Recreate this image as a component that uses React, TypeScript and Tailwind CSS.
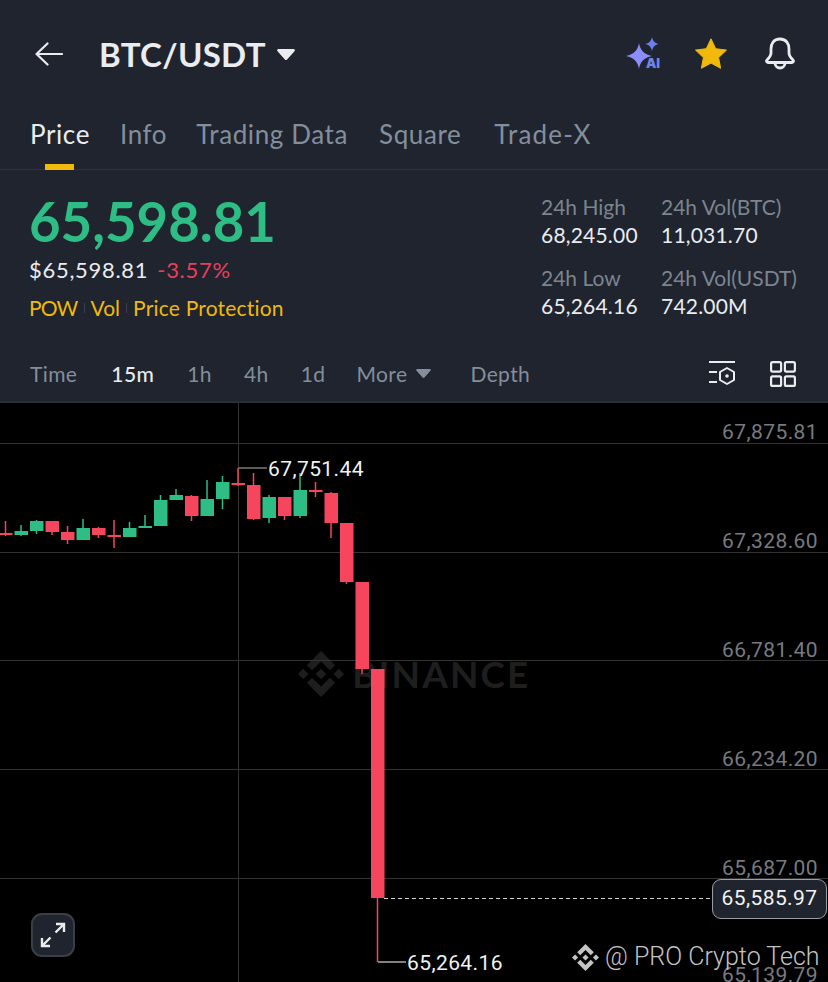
type Candle = { x: number; hi: number; lo: number; top: number; bottom: number; up: boolean };

const GREEN = '#2ebd85';
const RED = '#f6465d';

// x, wick top, wick bottom, body top, body bottom, green?
const candles: Candle[] = [
  [6, 521, 536, 533, 535, false],
  [21.5, 525, 536, 531, 535, true],
  [37, 520, 534, 521, 531, true],
  [52.5, 521, 535, 521, 532, false],
  [68, 526, 544, 532, 540, false],
  [83.5, 519, 540, 528, 540, true],
  [99, 527, 538, 528, 535, false],
  [114.5, 520, 548, 535, 537, false],
  [130, 522, 537, 528, 537, true],
  [145.5, 515, 528, 526, 528, true],
  [161, 495, 526, 500, 526, true],
  [176.5, 489, 500, 495, 500, true],
  [192, 495, 521, 496, 516, false],
  [207.5, 480, 516, 499, 516, true],
  [223, 476, 509, 482, 499, true],
  [238.5, 468, 486, 483, 485, false],
  [254, 473, 520, 485, 519, false],
  [269.5, 495, 523, 497, 518, true],
  [285, 497, 520, 497, 516, false],
  [300.5, 473, 518, 490, 516, true],
  [316, 482, 497, 490, 492, false],
  [331.5, 492, 538, 493, 523, false],
  [347, 523, 584, 523, 582, false],
  [362.5, 582, 674, 582, 669, false],
  [378, 669, 962, 669, 898, false],
].map(([x, hi, lo, top, bottom, up]) => ({ x, hi, lo, top, bottom, up } as Candle));

function BinanceMark({ className }: { className: string }) {
  return (
    <svg viewBox="0 0 126.61 126.61" className={className} fill="currentColor">
      <path d="M38.73 53.2l24.59-24.58 24.6 24.6 14.3-14.31L63.32 0 24.42 38.9zM0 63.31l14.3-14.31 14.31 14.31-14.31 14.3zM38.73 73.41l24.59 24.59 24.6-24.6 14.31 14.29-38.9 38.91-38.91-38.88zM98 63.31l14.3-14.31 14.31 14.3-14.31 14.32zM77.83 63.3L63.32 48.78 52.59 59.51l-1.24 1.23-2.54 2.54 14.51 14.5 14.51-14.47z" />
    </svg>
  );
}

function Caret({ className }: { className: string }) {
  return (
    <svg viewBox="0 0 18 11" className={className} fill="currentColor">
      <path d="M1.5 0h15c1.2 0 1.8 1.3 1 2.2l-7.4 8.2c-.6.7-1.6.7-2.2 0L.5 2.2C-.3 1.3.3 0 1.5 0z" />
    </svg>
  );
}

function Chart() {
  return (
    <svg viewBox="0 403 828 579" className="absolute inset-0 h-[579px] w-[828px]">
      {[443.5, 552.5, 660.5, 769.5, 878.5].map((y) => (
        <line key={y} x1="0" x2="828" y1={y} y2={y} stroke="#333333" strokeWidth="1" />
      ))}
      <line x1="238.5" x2="238.5" y1="403" y2="982" stroke="#333333" strokeWidth="1" />
      <path d="M238.5 468H267" stroke="#9a9a9a" strokeWidth="1.2" fill="none" />
      <path d="M378 962H406" stroke="#d8d8d8" strokeWidth="1.2" fill="none" />
      <line x1="384" x2="712" y1="898.5" y2="898.5" stroke="#d0d0d0" strokeWidth="1" strokeDasharray="4 3" />
      {candles.map((c) => {
        const color = c.up ? GREEN : RED;
        return (
          <g key={c.x}>
            <line x1={c.x - 0.5} x2={c.x - 0.5} y1={c.hi} y2={c.lo} stroke={color} strokeWidth="1.5" />
            <rect x={c.x - 7} y={c.top} width="13.5" height={c.bottom - c.top} fill={color} />
          </g>
        );
      })}
    </svg>
  );
}

export default function App() {
  const axisText = "absolute right-[10px] font-['Roboto',sans-serif] text-[21px] leading-[24px] tracking-[0.4px] text-[#777b80]";
  const chartText = "absolute font-['Roboto',sans-serif] text-[21px] leading-[24px] tracking-[0.4px] text-[#f2f2f2]";

  return (
    <div className="flex h-[982px] w-[828px] flex-col overflow-hidden bg-[#1f242e] font-['Lato',sans-serif]">
      {/* Header */}
      <div className="flex h-[108px] shrink-0 items-center pl-[35px] pr-[32px]">
        <svg viewBox="0 0 28 24" className="h-[24px] w-[28px]" fill="none" stroke="#eaecef" strokeWidth="2.200" strokeLinecap="round" strokeLinejoin="round">
          <path d="M27 12H1.500M12.500 1.500L1.500 12l11 10.500" />
        </svg>
        <div className="ml-[36px] text-[33px] font-bold leading-[40px] tracking-[0.3px] text-[#eaecef]">BTC/USDT</div>
        <Caret className="ml-[11px] h-[11px] w-[18px] text-[#eaecef]" />
        <div className="ml-auto flex items-center">
          <svg viewBox="0 0 36 34" className="h-[34px] w-[36px]">
            <path d="M14 6c1.200 7.200 4.800 11 13 13-8.200 2-11.800 5.800-13 13-1.200-7.200-4.800-11-13-13 8.200-2 11.800-5.800 13-13z" fill="#8b8dfb" />
            <path d="M27 0c.7 3.800 2.500 6 6.500 7-4 1-5.800 3.200-6.500 7-.7-3.800-2.500-6-6.500-7 4-1 5.800-3.200 6.500-7z" fill="#6a80f0" />
            <text x="21" y="31" fontSize="13" fontWeight="900" fill="#6f86e8" fontFamily="Inter, sans-serif">AI</text>
          </svg>
          <svg viewBox="0 0 32 32" className="ml-[34px] h-[32px] w-[32px]">
            <path d="M16 .8l4.700 9.900 10.800 1.400-7.900 7.500 2 10.700L16 25.100 6.400 30.300l2-10.700L.5 12.100l10.800-1.400z" fill="#f0b90b" stroke="#f0b90b" strokeWidth="1" strokeLinejoin="round" />
          </svg>
          <svg viewBox="0 0 32 34" className="ml-[37px] h-[34px] w-[32px]" fill="none" stroke="#eaecef" strokeWidth="2.800" strokeLinecap="round" strokeLinejoin="round">
            <path d="M16 2C9.500 2 7 7 7 12v4c0 3-2 5-4 7-1 1-.5 2.500 1 2.500h24c1.500 0 2-1.500 1-2.500-2-2-4-4-4-7v-4c0-5-2.500-10-9-10z" />
            <path d="M11 26a5 5 0 0 0 10 0" />
          </svg>
        </div>
      </div>

      {/* Tabs */}
      <div className="flex h-[62px] shrink-0 border-b border-[#2e343e] pl-[30px] text-[26px] leading-[52px] tracking-[0.6px] text-[#848e9c]">
        <div className="relative text-[#eaecef]">
          Price
          <div className="absolute bottom-[-1px] left-[15px] h-[6px] w-[29px] bg-[#f0b90b]" />
        </div>
        <div className="ml-[30px]">Info</div>
        <div className="ml-[29px]">Trading Data</div>
        <div className="ml-[31px]">Square</div>
        <div className="ml-[33px] tracking-[1.200px]">Trade-X</div>
      </div>

      {/* Price summary */}
      <div className="flex h-[170px] shrink-0 pt-[23px]">
        <div className="w-[541px] pl-[29px]">
          <div className="text-[54.500px] font-bold leading-[56px] text-[#2ebd85]">65,598.81</div>
          <div className="mt-[7px] flex text-[22px] leading-[28px] tracking-[0.7px]">
            <span className="text-[#eaecef]">$65,598.81</span>
            <span className="ml-[9px] text-[#e8405a]">-3.57%</span>
          </div>
          <div className="mt-[10px] flex items-center text-[21px] leading-[28px] text-[#f0b90b]">
            <span className="tracking-[-0.8px]">POW</span>
            <span className="mx-[6px] h-[10px] w-px bg-[#3a404a]" />
            <span>Vol</span>
            <span className="mx-[6px] h-[10px] w-px bg-[#3a404a]" />
            <span className="tracking-[0.2px]">Price Protection</span>
          </div>
        </div>
        <div className="grid grid-cols-[120px_auto] content-start text-[21px] leading-[28px] text-[#eaecef]">
          <div className="text-[#7c8490]">24h High</div>
          <div className="text-[#7c8490]">24h Vol(BTC)</div>
          <div className="tracking-[0.2px]">68,245.00</div>
          <div className="tracking-[0.2px]">11,031.70</div>
          <div className="mt-[15px] text-[#7c8490]">24h Low</div>
          <div className="mt-[15px] text-[#7c8490]">24h Vol(USDT)</div>
          <div className="tracking-[0.2px]">65,264.16</div>
          <div className="tracking-[0.2px]">742.00M</div>
        </div>
      </div>

      {/* Intervals */}
      <div className="flex h-[63px] shrink-0 items-center border-b-2 border-[#2a303a] pl-[30px] pr-[32px] pt-[6px] text-[21px] tracking-[0.4px] text-[#848e9c]">
        <span>Time</span>
        <span className="ml-[34px] font-medium text-[#eaecef]">15m</span>
        <span className="ml-[33px]">1h</span>
        <span className="ml-[32px]">4h</span>
        <span className="ml-[32px]">1d</span>
        <span className="ml-[31px]">More</span>
        <Caret className="ml-[9px] h-[9px] w-[15px] text-[#848e9c]" />
        <span className="ml-[39px]">Depth</span>
        <div className="ml-auto flex items-center gap-[34px]">
          <svg viewBox="0 0 27 26" className="h-[26px] w-[27px]" fill="none" stroke="#eaecef" strokeWidth="2">
            <path d="M0 1h26M0 11h8M0 21h8" />
            <path d="M18 7l7 4v8l-7 4-7-4v-8z" strokeLinejoin="round" />
            <circle cx="18" cy="15" r="1.800" fill="#eaecef" stroke="none" />
          </svg>
          <svg viewBox="0 0 26 26" className="h-[26px] w-[26px]" fill="none" stroke="#eaecef" strokeWidth="2.200">
            <rect x="1.100" y="1.100" width="10" height="9.500" rx="1.500" />
            <rect x="14.900" y="1.100" width="10" height="9.500" rx="1.500" />
            <rect x="1.100" y="15.400" width="10" height="9.500" rx="1.500" />
            <rect x="14.900" y="15.400" width="10" height="9.500" rx="1.500" />
          </svg>
        </div>
      </div>

      {/* Chart */}
      <div className="relative min-h-0 flex-1 overflow-hidden bg-black">
        <div className="absolute left-[298px] top-[248px] flex items-center text-[#1e1e1e]">
          <BinanceMark className="h-[46px] w-[46px]" />
          <span className="ml-[8px] text-[37px] font-bold leading-[46px] tracking-[2.100px]">BINANCE</span>
        </div>
        <Chart />
        <div className={`${axisText} top-[17px]`}>67,875.81</div>
        <div className={`${axisText} top-[126px]`}>67,328.60</div>
        <div className={`${axisText} top-[235px]`}>66,781.40</div>
        <div className={`${axisText} top-[344px]`}>66,234.20</div>
        <div className={`${axisText} top-[453px]`}>65,687.00</div>
        <div className={`${axisText} top-[560px]`}>65,139.79</div>
        <div className={`${chartText} left-[268px] top-[54px]`}>67,751.44</div>
        <div className={`${chartText} left-[407px] top-[548px]`}>65,264.16</div>
        <div className="absolute left-[712px] top-[476px] flex h-[40px] w-[115px] items-center justify-center rounded-[9px] border border-[#9a9da1] bg-[#1f242e] font-['Roboto',sans-serif] text-[21px] tracking-[0.4px] text-[#f2f2f2]">
          65,585.97
        </div>
        <div className="absolute left-[31px] top-[510px] flex h-[44px] w-[44px] items-center justify-center rounded-[11px] border-2 border-[#3a3f46] bg-[#1f242e]">
          <svg viewBox="0 0 28 28" className="h-[28px] w-[28px]" fill="none" stroke="#eaecef" strokeWidth="2.400">
            <path d="M16.500 11.500L25 3M17 3h8v8M11.500 16.500L3 25M3 17v8h8" />
          </svg>
        </div>
        <div className="absolute left-[572px] top-[537px] flex items-center text-[#c4c4c4]">
          <BinanceMark className="h-[27px] w-[27px]" />
          <span className="ml-[6px] font-['Roboto',sans-serif] text-[25px] font-light leading-[34px]">@ PRO Crypto Tech</span>
        </div>
      </div>
    </div>
  );
}
